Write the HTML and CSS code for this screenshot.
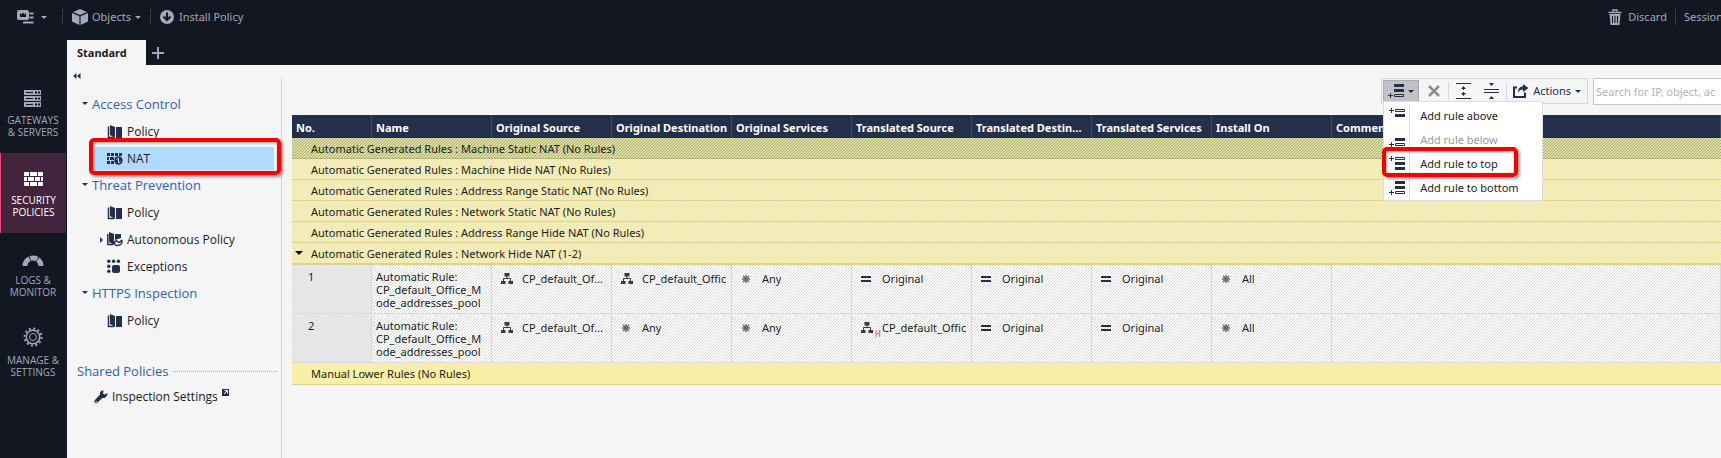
FILE: index.html
```html
<!DOCTYPE html>
<html lang="en">
<head>
<meta charset="utf-8">
<title>SmartConsole - NAT policy</title>
<link rel="stylesheet" href="styles.css">
</head>
<body>
<svg class="defs" aria-hidden="true">
  <symbol id="i-policy" viewBox="0 0 16 16">
    <path fill="currentColor" d="M3 1l5 2v11l-5-3zM9 3h6v11H9z"/>
    <path fill="none" stroke="currentColor" stroke-width="1.500" d="M1.500 2.500v11H7"/>
  </symbol>
  <symbol id="i-net" viewBox="0 0 12 12">
    <path fill="currentColor" d="M3.500 0h5v3.500h-5zM0 8h4.500v3H0zM7.500 8H12v3H7.500z"/>
    <path fill="none" stroke="currentColor" d="M6 3v2.500M2.500 8V5.500h7V8"/>
  </symbol>
  <symbol id="i-star" viewBox="0 0 10 10">
    <path fill="none" stroke="#6b6b6b" stroke-width="1.500" d="M5 1v8M1 5h8M2 2l6 6M8 2l-6 6"/>
  </symbol>
  <symbol id="i-eq" viewBox="0 0 10 8">
    <path fill="#24304a" d="M0 1h10v2H0zM0 5h10v2H0z"/>
  </symbol>
</svg>

<header class="topbar">
  <nav class="topbar-group">
    <button class="top-btn top-menu" aria-label="Menu">
      <svg width="17" height="15" viewBox="0 0 17 15"><rect width="12" height="10" rx="2" fill="#a0a8ba"/><path d="M3 3l1.500 1.500L6 2.500l1.500 2L9 3v4H3z" fill="#131722"/><path d="M12.500 2.500h4v2h-4zM12.500 6.500h4v2h-4zM6 11.500h10.500v2H6z" fill="#a0a8ba"/></svg>
      <i class="caret"></i>
    </button>
    <button class="top-btn top-objects">
      <svg width="16" height="16" viewBox="0 0 16 16"><path fill="#a0a8ba" d="M8 0l7 3-7 3-7-3zM0 4l7.400 3.200V16L0 12.500zM16 4L8.600 7.200V16L16 12.500z"/></svg>
      <span>Objects</span><i class="caret"></i>
    </button>
    <button class="top-btn top-install">
      <svg width="14" height="14" viewBox="0 0 14 14"><circle cx="7" cy="7" r="7" fill="#a0a8ba"/><path d="M7 2.500v7M3.500 6.500L7 10l3.500-3.500" fill="none" stroke="#131722" stroke-width="2"/></svg>
      <span>Install Policy</span>
    </button>
  </nav>
  <div class="topbar-group">
    <button class="top-btn top-discard">
      <svg width="14" height="16" viewBox="0 0 14 16"><path d="M5 2.500V1h4v1.500M.5 3.500h13" fill="none" stroke="#a0a8ba" stroke-width="1.500"/><path d="M1.500 5h11l-1 11h-9z" fill="#a0a8ba"/><path d="M4.500 7v7M7 7v7M9.500 7v7" stroke="#131722"/></svg>
      <span>Discard</span>
    </button>
    <span class="session">Session</span>
  </div>
</header>

<div class="body">
  <nav class="rail">
    <a class="rail-item" href="#gateways">
      <svg width="18" height="17" viewBox="0 0 18 17"><path fill="#a0a8ba" d="M0 0h17v5H0zM0 6h17v5H0zM0 12h17v5H0z"/><path fill="#131722" d="M2 2h7v1H2zM2 8h7v1H2zM2 14h7v1H2zM11 1.500h2v2h-2zM14 1.500h2v2h-2zM11 7.500h2v2h-2zM14 7.500h2v2h-2zM11 13.500h2v2h-2zM14 13.500h2v2h-2z"/></svg>
      <span>GATEWAYS<br>&amp; SERVERS</span>
    </a>
    <a class="rail-item active" href="#policies" aria-current="page">
      <svg width="20" height="15" viewBox="0 0 20 15"><path fill="#fff" d="M0 1q0-1 1-1h4v4H0zM6 0h7v4H6zM14 0h4q1 0 1 1v3h-5zM0 5h3v4H0zM4 5h6v4H4zM11 5h5v4h-5zM17 5h2v4h-2zM0 10h5v4H1q-1 0-1-1zM6 10h7v4H6zM14 10h5v3q0 1-1 1h-4z"/></svg>
      <span>SECURITY<br>POLICIES</span>
    </a>
    <a class="rail-item" href="#logs">
      <svg width="22" height="13" viewBox="0 0 22 13"><path d="M3 12a8 8 0 0 1 16 0" fill="none" stroke="#a0a8ba" stroke-width="5" stroke-dasharray="9 .8 7 .8 8"/></svg>
      <span>LOGS &amp;<br>MONITOR</span>
    </a>
    <a class="rail-item" href="#manage">
      <svg width="20" height="20" viewBox="0 0 20 20" fill="none" stroke="#a0a8ba"><circle cx="10" cy="10" r="8.500" stroke-width="2" stroke-dasharray="2 2.450"/><circle cx="10" cy="10" r="6.700" stroke-width="1.500"/><circle cx="10" cy="10" r="3.500"/></svg>
      <span>MANAGE &amp;<br>SETTINGS</span>
    </a>
  </nav>

  <div class="main">
    <div class="tabs" role="tablist">
      <button class="tab" role="tab" aria-selected="true">Standard</button>
      <button class="tab-add" aria-label="New tab"><svg width="12" height="12" viewBox="0 0 12 12"><path d="M6 0v12M0 6h12" stroke="#a0a8ba" stroke-width="2"/></svg></button>
    </div>
    <div class="work">
      <aside class="tree">
        <button class="collapse" aria-label="Collapse"><svg width="8" height="6" viewBox="0 0 8 6"><path fill="#24304a" d="M3.500 0v6L0 3zM7.500 0v6L4 3z"/></svg></button>
        <div class="tree-list">
          <button class="tree-head"><i class="caret"></i>Access Control</button>
          <a class="tree-item" href="#a1"><svg class="ti"><use href="#i-policy"/></svg>Policy</a>
          <a class="tree-item selected" href="#a2" aria-current="page"><svg class="ti" viewBox="0 0 16 16"><path fill="#24304a" d="M0 2h3v3H0zM4 2h3v3H4zM8 2h3v3H8zM12 2h3v3h-3zM0 6h2v3H0zM3 6h4v3H3zM0 10h3v3H0zM4 10h3v3H4z"/><circle cx="11.500" cy="9.500" r="4.200" fill="#24304a"/><path d="M9.500 8.500l2-1.500v5l2-1.500" fill="none" stroke="#aedbff"/></svg>NAT</a>
          <button class="tree-head"><i class="caret"></i>Threat Prevention</button>
          <a class="tree-item" href="#t1"><svg class="ti"><use href="#i-policy"/></svg>Policy</a>
          <a class="tree-item sub" href="#t2"><i class="caret-right"></i><svg class="ti" viewBox="0 0 16 16"><path fill="#24304a" d="M2 0l5 2v11l-5-3zM8 2h6v4l-6 2z"/><path fill="none" stroke="#24304a" stroke-width="1.500" d="M.8 2v10.500H6M8 9.500c2-2 3 1 4 1s3-4 3-1-3 4-5 4-3-2-2-4z"/></svg>Autonomous Policy</a>
          <a class="tree-item" href="#t3"><svg class="ti" viewBox="0 0 16 16"><g fill="#24304a"><circle cx="1.800" cy="2.300" r="1.700"/><circle cx="6.600" cy="2.300" r="1.700"/><circle cx="11.400" cy="2.300" r="1.700"/><circle cx="1.800" cy="7.300" r="1.700"/><circle cx="1.800" cy="12.300" r="1.700"/><rect x="5" y="6" width="8" height="8" rx="2"/></g></svg>Exceptions</a>
          <button class="tree-head"><i class="caret"></i>HTTPS Inspection</button>
          <a class="tree-item" href="#h1"><svg class="ti"><use href="#i-policy"/></svg>Policy</a>
        </div>
        <div class="shared"><span>Shared Policies</span></div>
        <a class="shared-item" href="#s1">
          <svg width="14" height="14" viewBox="0 0 14 14"><path fill="#24304a" d="M13.500 3l-3 1.500-1.500-1L9.500.5C7 0 5.500 2 6 4.500L.5 10.500c-1 1.500 1 3.500 2.500 2.500l5.500-5c3 .5 5-2 5-5z"/><circle cx="2.200" cy="11.800" r=".8" fill="#f5f5f5"/></svg>
          <span>Inspection Settings</span>
          <svg class="ext" width="7" height="7" viewBox="0 0 7 7"><path fill="#24304a" d="M0 0h7v7H0z"/><path d="M2 5l3-3M2.500 1.500h3v3" fill="none" stroke="#fff"/></svg>
        </a>
      </aside>

      <section class="content">
        <div class="bar">
          <div class="tools">
            <div class="add-wrap">
              <button class="tool add" aria-haspopup="true" aria-expanded="true" aria-label="Add rule">
                <svg width="17" height="14" viewBox="0 0 17 14"><path fill="#24304a" d="M6 0h10v3H6zM6 5h10v3H6z"/><path fill="none" stroke="#24304a" d="M6.500 10.500h9v2h-9zM0 11.500h5M2.500 9v5"/></svg>
                <i class="caret"></i>
              </button>
              <div class="menu" role="menu">
                <button class="menu-item" role="menuitem"><span class="gut"><svg width="16" height="16" viewBox="0 0 16 16"><path fill="none" stroke="#24304a" d="M6.500 1.500h9v2h-9zM0 2.500h5M2.500 0v5"/><path fill="#24304a" d="M6 6h10v3H6z"/></svg></span>Add rule above</button>
                <button class="menu-item" role="menuitem" disabled><span class="gut"><svg width="16" height="16" viewBox="0 0 16 16"><path fill="#24304a" d="M6 6h10v3H6z"/><path fill="none" stroke="#24304a" d="M6.500 11.500h9v2h-9zM0 12.500h5M2.500 10v5"/></svg></span>Add rule below</button>
                <button class="menu-item marked" role="menuitem"><span class="gut"><svg width="16" height="16" viewBox="0 0 16 16"><path fill="none" stroke="#24304a" d="M6.500 1.500h9v2h-9zM0 2.500h5M2.500 0v5"/><path fill="#24304a" d="M6 6h10v3H6zM6 11h10v3H6z"/></svg></span>Add rule to top</button>
                <button class="menu-item" role="menuitem"><span class="gut"><svg width="16" height="16" viewBox="0 0 16 16"><path fill="#24304a" d="M6 1h10v3H6zM6 6h10v3H6z"/><path fill="none" stroke="#24304a" d="M6.500 11.500h9v2h-9zM0 12.500h5M2.500 10v5"/></svg></span>Add rule to bottom</button>
              </div>
            </div>
            <button class="tool" aria-label="Delete"><svg width="12" height="12" viewBox="0 0 12 12"><path d="M1 1l10 10M11 1L1 11" stroke="#8b8d92" stroke-width="2.500"/></svg></button>
            <button class="tool exp" aria-label="Expand all"><svg width="15" height="16" viewBox="0 0 15 16"><path fill="#24304a" d="M0 0h15v1H0zM0 15h15v1H0zM5 6l2.500-3L10 6zM5 10l2.500 3L10 10z"/><path stroke="#24304a" d="M7.500 5v2M7.500 9v2"/></svg></button>
            <button class="tool" aria-label="Collapse all"><svg width="15" height="16" viewBox="0 0 15 16"><path fill="#24304a" d="M0 6h15v1H0zM0 9h15v1H0zM5 0h5L7.500 3zM5 16h5l-2.500-3z"/></svg></button>
            <button class="tool act"><svg width="16" height="14" viewBox="0 0 16 14"><path d="M4 3.500H1V13h11V8.500" fill="none" stroke="#24304a" stroke-width="2"/><path fill="#24304a" d="M5 9c0-5 2-6.500 5-6.500V0l5.500 4L10 8V5.500C7.500 5.500 6 6.500 5 9z"/></svg><span>Actions</span><i class="caret"></i></button>
          </div>
          <input class="search" type="search" aria-label="Search" placeholder="Search for IP, object, action...">
        </div>

        <table class="rules">
          <colgroup><col class="c-no"><col class="c"><col class="c"><col class="c"><col class="c"><col class="c"><col class="c"><col class="c"><col class="c"><col></colgroup>
          <thead><tr><th>No.</th><th>Name</th><th>Original Source</th><th>Original Destination</th><th>Original Services</th><th>Translated Source</th><th class="tight">Translated Destination</th><th>Translated Services</th><th>Install On</th><th>Comments</th></tr></thead>
          <tbody>
            <tr class="group current"><td colspan="10">Automatic Generated Rules : Machine Static NAT <span>(No Rules)</span></td></tr>
            <tr class="group"><td colspan="10">Automatic Generated Rules : Machine Hide NAT <span>(No Rules)</span></td></tr>
            <tr class="group"><td colspan="10">Automatic Generated Rules : Address Range Static NAT <span>(No Rules)</span></td></tr>
            <tr class="group"><td colspan="10">Automatic Generated Rules : Network Static NAT <span>(No Rules)</span></td></tr>
            <tr class="group"><td colspan="10">Automatic Generated Rules : Address Range Hide NAT <span>(No Rules)</span></td></tr>
            <tr class="group open"><td colspan="10"><i class="caret"></i>Automatic Generated Rules : Network Hide NAT <span>(1-2)</span></td></tr>
            <tr class="rule">
              <td class="no">1</td><td class="name">Automatic Rule:<br>CP_default_Office_Mode_addresses_pool</td>
              <td><div class="obj"><svg class="net"><use href="#i-net"/></svg><span class="dots">CP_default_Office_Mode</span></div></td>
              <td><div class="obj"><svg class="net"><use href="#i-net"/></svg><span>CP_default_Offic</span></div></td>
              <td><div class="obj"><svg class="star"><use href="#i-star"/></svg><span>Any</span></div></td>
              <td><div class="obj"><svg class="eq"><use href="#i-eq"/></svg><span>Original</span></div></td>
              <td><div class="obj"><svg class="eq"><use href="#i-eq"/></svg><span>Original</span></div></td>
              <td><div class="obj"><svg class="eq"><use href="#i-eq"/></svg><span>Original</span></div></td>
              <td><div class="obj"><svg class="star"><use href="#i-star"/></svg><span>All</span></div></td><td></td>
            </tr>
            <tr class="rule">
              <td class="no">2</td><td class="name">Automatic Rule:<br>CP_default_Office_Mode_addresses_pool</td>
              <td><div class="obj"><svg class="net"><use href="#i-net"/></svg><span class="dots">CP_default_Office_Mode</span></div></td>
              <td><div class="obj"><svg class="star"><use href="#i-star"/></svg><span>Any</span></div></td>
              <td><div class="obj"><svg class="star"><use href="#i-star"/></svg><span>Any</span></div></td>
              <td><div class="obj"><svg class="net badge"><use href="#i-net"/></svg><b class="hide">H</b><span>CP_default_Offic</span></div></td>
              <td><div class="obj"><svg class="eq"><use href="#i-eq"/></svg><span>Original</span></div></td>
              <td><div class="obj"><svg class="eq"><use href="#i-eq"/></svg><span>Original</span></div></td>
              <td><div class="obj"><svg class="star"><use href="#i-star"/></svg><span>All</span></div></td><td></td>
            </tr>
            <tr class="group plain"><td colspan="10">Manual Lower Rules <span>(No Rules)</span></td></tr>
          </tbody>
        </table>
      </section>
    </div>
  </div>
</div>
</body>
</html>
```
FILE: styles.css
```css
* { box-sizing: border-box; }
html, body { height: 100%; }
body {
  margin: 0;
  display: flex;
  flex-direction: column;
  overflow: hidden;
  background: #131722;
  color: #1c1c1c;
  font: 11px/16px "Noto Sans", "Open Sans", sans-serif;
}
button {
  margin: 0;
  padding: 0;
  border: 0;
  background: none;
  color: inherit;
  font: inherit;
  text-align: left;
}
a { color: inherit; text-decoration: none; }
svg { display: block; flex: none; }
.defs { position: absolute; width: 0; height: 0; }

.caret {
  flex: none;
  width: 0;
  height: 0;
  border: 3px solid transparent;
  border-top-color: currentColor;
  border-bottom: 0;
}
.caret-right {
  flex: none;
  width: 0;
  height: 0;
  border: 3px solid transparent;
  border-left-color: #24304a;
  border-right: 0;
}

/* top bar */
.topbar {
  display: flex;
  justify-content: space-between;
  height: 40px;
  padding-top: 9px;
  color: #a0a8ba;
  white-space: nowrap;
}
.topbar-group { display: flex; height: 16px; }
.top-btn { display: flex; align-items: center; border-right: 1px solid #3a4050; }
.top-menu { gap: 7px; padding: 0 15px 0 17px; }
.top-objects { gap: 4px; padding: 0 9px 0 9px; }
.top-install { gap: 5px; padding-left: 9px; border: 0; }
.top-discard { gap: 6px; padding-right: 8px; }
.session { padding-left: 8px; margin-right: -2px; }

.body { display: flex; flex: 1; min-height: 0; }

/* left rail */
.rail {
  flex: none;
  width: 67px;
  padding: 33px 1px 0 0;
  color: #a0a8ba;
  font-family: "Open Sans", sans-serif;
  font-size: 10px;
  line-height: 12px;
  text-align: center;
}
.rail-item { display: flex; flex-direction: column; align-items: center; justify-content: flex-end; gap: 7px; height: 80px; padding-bottom: 15px; }
.rail-item.active { background: #42243c; border-left: 1px solid #e8477f; color: #fff; }

.main { flex: 1; min-width: 0; display: flex; flex-direction: column; }
.tabs { display: flex; height: 25px; }
.tab { width: 79px; padding-left: 10px; background: #f5f5f5; font-weight: 700; }
.tab-add { padding-left: 6px; }
.work { flex: 1; min-height: 0; display: flex; background: #f5f5f5; }

/* policy tree */
.tree {
  flex: none;
  width: 215px;
  margin-top: 13px;
  border-right: 1px solid #d4d5d8;
  font-family: "Open Sans", sans-serif;
  font-size: 12px;
}
.collapse { display: flex; align-items: flex-start; height: 18px; margin-top: -5px; padding-left: 6px; }
.tree-list { display: flex; flex-direction: column; }
.tree-head, .tree-item { display: flex; align-items: center; height: 27px; }
.tree-head { gap: 4px; padding: 0 0 2px 15px; color: #2d62b8; font-size: 13px; }
.tree-head .caret { color: #24304a; }
.tree-item { gap: 4px; padding-left: 40px; }
.tree-item.sub { padding-left: 33px; }
.ti { width: 16px; height: 16px; color: #24304a; }
.tree-item.selected {
  position: relative;
  height: 23px;
  margin: 2px 7px 2px 27px;
  padding-left: 13px;
  background: #aedbff;
}
.selected::after, .marked::after {
  content: "";
  position: absolute;
  z-index: 1;
  inset: -9px -7px -5px -5px;
  border: 4px solid #f40000;
  border-radius: 5px;
  box-shadow: 2px 2px 3px #0006, inset 1px 1px 3px #0006;
}
.shared { display: flex; align-items: center; gap: 5px; margin-top: 29px; padding: 0 5px 0 10px; color: #2d62b8; font-size: 13px; }
.shared::after { content: ""; flex: 1; border-top: 1px dotted #a8aab0; }
.shared-item { display: flex; align-items: center; gap: 4px; margin-top: 10px; padding-left: 27px; }
.ext { align-self: flex-start; }

/* rules area */
.content { flex: 1; min-width: 0; padding: 13px 0 0 10px; }
.bar { display: flex; justify-content: flex-end; height: 37px; align-items: flex-start; }
.tools { display: flex; align-items: center; height: 26px; padding: 0 6px 0 1px; border: 1px solid #d4d5dc; margin-right: 5px; }
.search { flex: none; width: 136px; height: 27px; margin-right: -8px; padding: 0 0 0 2px; border: 1px solid #c3c5ca; background: #fff; font: inherit; }
.search::placeholder { color: #b0b2b8; opacity: 1; }
.tool { display: flex; align-items: center; justify-content: center; width: 29px; height: 18px; color: #24304a; }
.add-wrap { position: relative; }
.add { width: 36px; height: 22px; gap: 3px; background: #c0c2c6; border: 1px solid #a9abb0; }
.exp { border-left: 1px solid #d4d5dc; }
.act { width: auto; gap: 4px; padding-left: 6px; border-left: 1px solid #d4d5dc; }

.menu { position: absolute; z-index: 2; top: 21px; left: 0; width: 160px; background: #fff; border: 1px solid #dcdde2; padding-top: 2px; }
.menu-item { display: flex; align-items: center; width: 100%; height: 24px; gap: 10px; white-space: nowrap; }
.menu-item:disabled { color: #9a9a9a; }
.gut { display: flex; align-items: flex-start; justify-content: center; width: 26px; height: 24px; padding-top: 4px; border-right: 1px solid #dcdde2; }
.marked { position: relative; }
.marked::after { inset: -5px 24px -1px -2px; }

.rules { width: 100%; table-layout: fixed; border-collapse: separate; border-spacing: 0; }
.c-no { width: 80px; }
.c { width: 120px; }
.rules th {
  height: 23px;
  padding: 2px 2px 0 4px;
  background: #24304a;
  border-right: 1px solid #3d4962;
  color: #fff;
  font-weight: 700;
  text-align: left;
  white-space: nowrap;
  overflow: hidden;
  text-overflow: ellipsis;
}
.rules th.tight { padding-right: 8px; }
.rules td { padding: 0; }
.rules .group td {
  position: relative;
  height: 21px;
  padding: 1px 0 0 19px;
  background: #fbf1a6 url("data:image/svg+xml,%3Csvg xmlns='http://www.w3.org/2000/svg' width='3' height='3' shape-rendering='crispEdges' fill='%23e2e2d8'%3E%3Cpath d='M2 0h1v1H2zM1 1h1v1H1zM0 2h1v1H0z'/%3E%3C/svg%3E");
  border-bottom: 1px solid #dcd28c;
}
.rules .group.current td {
  background: #e6e08c url("data:image/svg+xml,%3Csvg xmlns='http://www.w3.org/2000/svg' width='3' height='3' shape-rendering='crispEdges' fill='%2398aca0'%3E%3Cpath d='M2 0h1v1H2zM1 1h1v1H1zM0 2h1v1H0z'/%3E%3C/svg%3E");
  border-bottom-color: #b5b378;
}
.rules .group.open td { height: 22px; border-bottom-width: 2px; }
.rules .group.plain td { height: 22px; background: #faefa6; }
.group .caret { position: absolute; left: 3px; top: 8px; border-width: 4px 4px 0; color: #000; }
.rule td {
  height: 49px;
  vertical-align: top;
  background: #fff url("data:image/svg+xml,%3Csvg xmlns='http://www.w3.org/2000/svg' width='3' height='3' shape-rendering='crispEdges' fill='%23dadada'%3E%3Cpath d='M2 0h1v1H2zM1 1h1v1H1zM0 2h1v1H0z'/%3E%3C/svg%3E");
  border-right: 1px solid #d8d9dd;
  border-bottom: 1px solid #d8d9dd;
}
.rules .rule .no { padding: 4px 0 0 16px; background-color: #ececef; }
.rules .rule .name { padding: 5px 4px 0; line-height: 13px; word-break: break-all; }
.obj { display: flex; align-items: center; height: 16px; margin: 6px 3px 0 9px; font-variant-ligatures: none; }
.obj span { overflow: hidden; white-space: nowrap; }
.obj .dots { margin-right: 3px; text-overflow: ellipsis; }
.obj svg { color: #3a3a3a; }
.net { width: 12px; height: 12px; margin-right: 9px; }
.net.badge { margin-right: 2px; }
.star { width: 10px; height: 10px; margin-right: 11px; }
.eq { width: 10px; height: 8px; margin-right: 11px; }
.hide { flex: none; width: 7px; padding-top: 12px; color: #f02828; font-size: 8px; line-height: 8px; font-weight: 400; }
```
